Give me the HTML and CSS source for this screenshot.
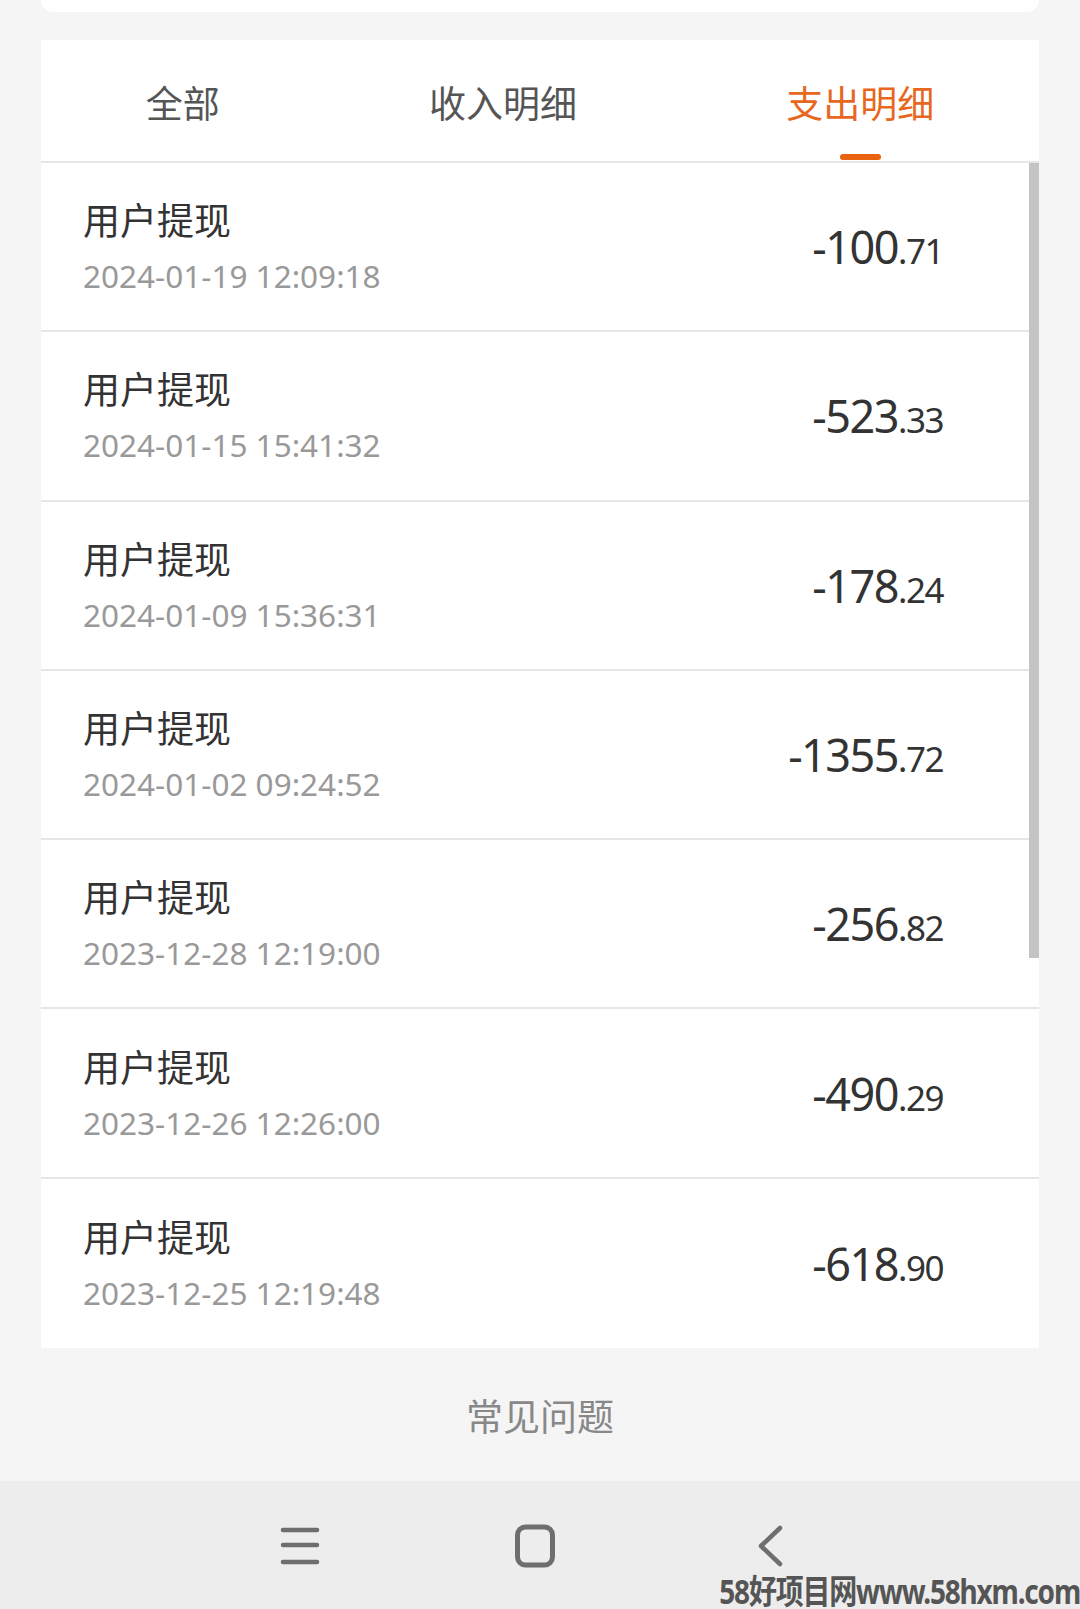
FILE: index.html
```html
<!DOCTYPE html>
<html lang="zh-CN">
<head>
    <meta charset="UTF-8">
    <meta name="viewport" content="width=device-width, initial-scale=1.0">
    <title>资金明细</title>
    <link rel="stylesheet" href="styles.css">
</head>
<body>
    <div class="page">
        <div class="top-card"></div>

        <div class="detail-card">
            <div class="tabs">
                <div class="tab">
                    <span class="tab-text">全部</span>
                    <span class="tab-line"></span>
                </div>
                <div class="tab">
                    <span class="tab-text">收入明细</span>
                    <span class="tab-line"></span>
                </div>
                <div class="tab active">
                    <span class="tab-text">支出明细</span>
                    <span class="tab-line"></span>
                </div>
            </div>

            <div class="list">
                <div class="scrollbar"></div>

                <div class="row">
                    <div class="info">
                        <div class="title">用户提现</div>
                        <div class="date">2024-01-19 12:09:18</div>
                    </div>
                    <div class="amount"><span class="int">-100</span><span class="dec">.71</span></div>
                </div>
                <div class="row">
                    <div class="info">
                        <div class="title">用户提现</div>
                        <div class="date">2024-01-15 15:41:32</div>
                    </div>
                    <div class="amount"><span class="int">-523</span><span class="dec">.33</span></div>
                </div>
                <div class="row">
                    <div class="info">
                        <div class="title">用户提现</div>
                        <div class="date">2024-01-09 15:36:31</div>
                    </div>
                    <div class="amount"><span class="int">-178</span><span class="dec">.24</span></div>
                </div>
                <div class="row">
                    <div class="info">
                        <div class="title">用户提现</div>
                        <div class="date">2024-01-02 09:24:52</div>
                    </div>
                    <div class="amount"><span class="int">-1355</span><span class="dec">.72</span></div>
                </div>
                <div class="row">
                    <div class="info">
                        <div class="title">用户提现</div>
                        <div class="date">2023-12-28 12:19:00</div>
                    </div>
                    <div class="amount"><span class="int">-256</span><span class="dec">.82</span></div>
                </div>
                <div class="row">
                    <div class="info">
                        <div class="title">用户提现</div>
                        <div class="date">2023-12-26 12:26:00</div>
                    </div>
                    <div class="amount"><span class="int">-490</span><span class="dec">.29</span></div>
                </div>
                <div class="row last">
                    <div class="info">
                        <div class="title">用户提现</div>
                        <div class="date">2023-12-25 12:19:48</div>
                    </div>
                    <div class="amount"><span class="int">-618</span><span class="dec">.90</span></div>
                </div>
            </div>
        </div>

        <div class="faq">常见问题</div>
    </div>

    <div class="navbar">
        <span class="nav-icon">
            <svg width="44" height="44" viewBox="0 0 44 44">
                <g stroke="#6e6e6e" stroke-width="4.5" stroke-linecap="round">
                    <line x1="5" y1="6" x2="39" y2="6"/>
                    <line x1="5" y1="21" x2="39" y2="21"/>
                    <line x1="5" y1="38" x2="39" y2="38"/>
                </g>
            </svg>
        </span>
        <span class="nav-icon">
            <svg width="44" height="44" viewBox="0 0 44 44">
                <rect x="4.5" y="3" width="35" height="38" rx="8" fill="none" stroke="#6e6e6e" stroke-width="5"/>
            </svg>
        </span>
        <span class="nav-icon">
            <svg width="44" height="44" viewBox="0 0 44 44">
                <polyline points="32,4 13,22 32,40" fill="none" stroke="#6e6e6e" stroke-width="4.5" stroke-linecap="round" stroke-linejoin="round"/>
            </svg>
        </span>

        <div class="watermark">58好项目网www.58hxm.com</div>
    </div>
</body>
</html>
```

FILE: styles.css
```css
body {
    margin: 0;
    background-color: #f5f5f5;
    font-family: "Noto Sans", "Noto Sans CJK SC", sans-serif;
    color: #333;
}

.page {
    padding: 0 41px;
}

.top-card {
    height: 12px;
    background-color: #fff;
    border-radius: 0 0 12px 12px;
}

.detail-card {
    margin-top: 28px;
    background-color: #fff;
}

/* tabs */
.tabs {
    display: flex;
    justify-content: space-around;
    height: 121px;
    border-bottom: 2px solid #e6e6e6;
}

.tab {
    display: flex;
    flex-direction: column;
    align-items: center;
    padding-top: 37px;
}

.tab-text {
    font-family: "Noto Sans CJK SC", sans-serif;
    font-size: 37px;
    line-height: 50px;
    color: #555;
}

.tab-line {
    width: 41px;
    height: 6px;
    margin-top: 27px;
    border-radius: 3px;
}

.tab.active .tab-text {
    color: #e8671f;
}

.tab.active .tab-line {
    background-color: #e8620f;
}

/* list */
.list {
    position: relative;
}

.scrollbar {
    position: absolute;
    top: 0;
    right: 0;
    width: 10px;
    height: 795px;
    background-color: #c4c4c4;
}

.row {
    box-sizing: border-box;
    height: 169.3px;
    display: flex;
    align-items: center;
    justify-content: space-between;
    padding: 0 96px 0 42px;
    border-bottom: 2px solid #e6e6e6;
}

.row.last {
    border-bottom: none;
}

.title {
    font-family: "Noto Sans CJK SC", sans-serif;
    font-size: 37px;
    line-height: 44px;
    color: #333;
}

.date {
    margin-top: 15px;
    font-size: 31.5px;
    line-height: 40px;
    color: #999;
}

.amount {
    color: #333;
    letter-spacing: -1.5px;
    white-space: nowrap;
}

.amount .int {
    font-size: 45px;
}

.amount .dec {
    font-size: 35px;
}

.faq {
    height: 133px;
    display: flex;
    align-items: center;
    justify-content: center;
    font-family: "Noto Sans CJK SC", sans-serif;
    font-size: 37px;
    color: #888;
}

/* system nav */
.navbar {
    position: relative;
    height: 130px;
    background-color: #ededed;
    display: flex;
    justify-content: center;
    align-items: center;
    gap: 191px;
    padding-right: 10px;
}

.nav-icon {
    display: flex;
    width: 44px;
    height: 44px;
}

.watermark {
    position: absolute;
    right: 0;
    bottom: 3px;
    font-family: "Noto Sans", "Noto Sans CJK SC", sans-serif;
    font-size: 28px;
    line-height: 28px;
    font-weight: bold;
    letter-spacing: -1.2px;
    color: #555;
    white-space: nowrap;
    transform: scaleY(1.2);
    transform-origin: bottom right;
}
```
